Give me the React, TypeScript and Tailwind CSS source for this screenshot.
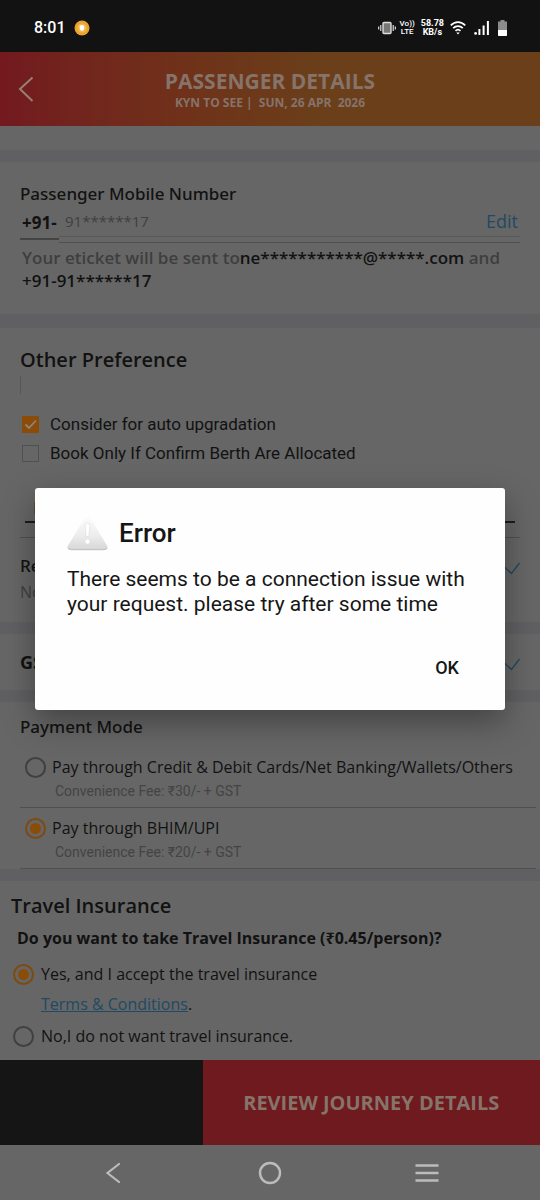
import { useState, type ReactNode } from 'react';

interface SectionProps {
  children: ReactNode;
  className?: string;
}

interface PaymentOption {
  id: string;
  label: string;
  fee: string;
}

const paymentOptions: PaymentOption[] = [
  { id: "cards", label: "Pay through Credit & Debit Cards/Net Banking/Wallets/Others", fee: "Convenience Fee: ₹30/- + GST" },
  { id: "upi", label: "Pay through BHIM/UPI", fee: "Convenience Fee: ₹20/- + GST" },
];

const radioStyle =
  "size-[21px] shrink-0 appearance-none rounded-full border-2 border-[#404040] p-[3px] bg-clip-content checked:border-[#7d4a12] checked:bg-[#8a4c08]";

function Section({ children, className = "" }: SectionProps) {
  return <section className={`bg-[#666666] ${className}`}>{children}</section>;
}

function StatusBar() {
  return (
    <div className="flex h-[52px] items-center bg-[#121212] pt-1 pl-[34px] pr-[33px] font-[Roboto,sans-serif] text-white">
      <span className="text-base font-medium">8:01</span>
      <svg className="ml-2" width="16" height="16" viewBox="0 0 16 16">
        <circle cx="8" cy="8" r="7.5" fill="#eba52c" />
        <circle cx="8" cy="8" r="4.6" fill="#f2b94e" />
        <path d="M5.6 5.6 8 5l2.2.8v3.4L8 11.2 5.9 9.6z" fill="#fff" />
      </svg>
      <div className="ml-auto flex items-center">
        <svg width="18" height="14" viewBox="0 0 18 14" stroke="#ddd" fill="none">
          <rect x="5" y="1.5" width="8" height="11" rx="1" fill="#777" strokeWidth="1.4" />
          <path d="M2.8 4v6M15.2 4v6M.7 5.5v3M17.3 5.5v3" strokeWidth="1.2" />
        </svg>
        <div className="ml-1 text-center text-[8px] leading-[8px] font-medium">
          <div>Vo))</div>
          <div>LTE</div>
        </div>
        <div className="ml-1.5 text-center text-[9px] leading-[9px] font-bold">
          <div>58.78</div>
          <div>KB/s</div>
        </div>
        <svg className="ml-1.5" width="16" height="14" viewBox="0 0 16 14" fill="none" stroke="#fff" strokeWidth="1.7">
          <path d="M.8 4.4C5-.1 11-.1 15.2 4.4M3.2 7.2c2.8-2.9 6.8-2.9 9.6 0M5.5 9.9c1.5-1.5 3.5-1.5 5 0" />
          <path d="m8 13.4-1.7-2h3.4z" fill="#fff" stroke="none" />
        </svg>
        <svg className="ml-2" width="16" height="14" viewBox="0 0 16 14" fill="#fff">
          <circle cx="1.6" cy="12.4" r="1.4" />
          <path d="M4.4 8h2v6h-2zM8.6 4.4h2V14h-2zM12.9 0h2v14h-2z" />
        </svg>
        <svg className="ml-2" width="9" height="16" viewBox="0 0 9 16">
          <path d="M2.5 0h4v1.4H9V15a1 1 0 0 1-1 1H1a1 1 0 0 1-1-1V1.4h2.5z" fill="#8c8c8c" />
          <path d="M0 10h9v5a1 1 0 0 1-1 1H1a1 1 0 0 1-1-1z" fill="#fff" />
        </svg>
      </div>
    </div>
  );
}

function Header() {
  return (
    <header className="relative flex h-[74px] flex-col items-center justify-center bg-linear-to-r from-[#73191f] via-[#6f3219] via-35% to-[#6a3f1a] to-60% pt-1 text-[#86736a]">
      <button type="button" aria-label="Back" className="absolute top-6 left-[18px]">
        <svg width="16" height="26" viewBox="0 0 16 26" fill="none" stroke="#98806f" strokeWidth="2">
          <path d="M14.5 1.5 2 13l12.5 12" />
        </svg>
      </button>
      <h1 className="text-[21px] leading-6 font-bold">PASSENGER DETAILS</h1>
      <p className="text-xs leading-5 font-bold whitespace-pre">KYN TO SEE |  SUN, 26 APR  2026</p>
    </header>
  );
}

function Tick() {
  return (
    <svg className="mt-2 shrink-0" width="18" height="14" viewBox="0 0 18 14" fill="none" stroke="#24495e" strokeWidth="1.4">
      <path d="M1.500 4 9.500 11.500 17.500 1" />
    </svg>
  );
}

function ErrorDialog({ onClose }: { onClose: () => void }) {
  return (
    <div className="absolute inset-0 flex items-center justify-center px-[35px]">
      <div
        role="alertdialog"
        aria-labelledby="error-title"
        className="w-full rounded-[3px] bg-[#fefefe] px-8 pt-6 pb-6 font-[Roboto,sans-serif] text-[#161616] shadow-[0_12px_32px_rgba(0,0,0,0.35)]"
      >
        <div className="flex items-center gap-[11px]">
          <svg width="41" height="36" viewBox="0 0 41 36">
            <defs>
              <linearGradient id="warn" x1="0" y1="0" x2="0" y2="1">
                <stop offset="0" stopColor="#fefefe" />
                <stop offset="0.6" stopColor="#ececec" />
                <stop offset="1" stopColor="#d6d6d6" />
              </linearGradient>
            </defs>
            <path d="M18 2.500q2.500-4 5 0l17 28q2 4.500-2.500 4.500h-34Q-1 35 1 30.500z" fill="url(#warn)" />
            <path d="M1.500 33q.5 1.700 3 1.700h32q2.500 0 3-1.700" fill="none" stroke="#bdbdbd" />
            <path d="M18 9q2.500-2 5 0l-1.200 12.500h-2.600z" fill="#fff" stroke="#dadada" strokeWidth=".6" />
            <circle cx="20.500" cy="26.500" r="2.700" fill="#fff" stroke="#d2d2d2" strokeWidth=".6" />
          </svg>
          <h2 id="error-title" className="text-[26px] leading-[42px] font-medium">Error</h2>
        </div>
        <p className="mt-[13px] text-[21px] leading-[25px]">
          There seems to be a connection issue with your request. please try after some time
        </p>
        <div className="mt-[33px] flex justify-end pr-[14px]">
          <button type="button" onClick={onClose} className="text-lg leading-9 font-medium">OK</button>
        </div>
      </div>
    </div>
  );
}

export default function App() {
  const [showError, setShowError] = useState(true);
  const [payment, setPayment] = useState("upi");
  const [insurance, setInsurance] = useState("yes");

  return (
    <div className="min-h-screen bg-[#666666] font-['Open_Sans','Noto_Sans',sans-serif] text-[#121212]">
      <StatusBar />
      <div className="relative">
        <Header />

        <main className="bg-[#606063]">
          <div className="mb-3 h-6 bg-[#666666]" />

          <Section className="px-5 pt-5 pb-[22px]">
            <label htmlFor="mobile" className="block font-['Noto_Sans',sans-serif] text-[17px] leading-6 font-medium">Passenger Mobile Number</label>
            <div className="flex items-start">
              <span className="h-[34px] w-[39px] border-b-2 border-[#444444] pl-0.5 text-[17px] leading-[34px] font-bold">+91-</span>
              <div className="h-[37px] flex-1 border-b border-[#505050]">
                <div className="flex h-[31px] items-center border-b border-[#585858] pl-1.5">
                  <input id="mobile" readOnly value="91******17" className="w-0 flex-1 bg-transparent text-[15px] text-[#404040] outline-none" />
                  <button type="button" className="pr-0.5 text-lg text-[#1f4a63]">Edit</button>
                </div>
              </div>
            </div>
            <p className="pt-[3px] pl-0.5 text-[17px] leading-[23px] font-semibold">
              <span className="text-[#3e3e3e]">Your eticket will be sent to</span>ne***********@*****.com <span className="text-[#3e3e3e]">and</span> +91-91******17
            </p>
          </Section>

          <Section className="mt-3.5 px-5 pt-5 pb-4">
            <h2 className="text-xl leading-6 font-semibold">Other Preference</h2>
            <div className="mt-1 mb-[18px] h-[18px] border-l border-[#555555]" />
            <div className="flex flex-col gap-[5px] pl-0.5 font-[Roboto,sans-serif] text-[17px] leading-6">
              <label className="flex items-center gap-[11px]">
                <span className="grid">
                  <input type="checkbox" defaultChecked className="size-[17px] appearance-none border border-[#505050] [grid-area:1/1] checked:border-[#8a4c08] checked:bg-[#8a4c08]" />
                  <svg className="pointer-events-none [grid-area:1/1]" width="17" height="17" viewBox="0 0 17 17" fill="none" stroke="#8f8578" strokeWidth="1.800">
                    <path d="m3.500 8.500 3.500 3.500 7-7.500" />
                  </svg>
                </span>
                Consider for auto upgradation
              </label>
              <label className="flex items-center gap-[11px]">
                <input type="checkbox" className="size-[17px] appearance-none border border-[#505050] checked:bg-[#8a4c08]" />
                Book Only If Confirm Berth Are Allocated
              </label>
            </div>
            <div className="mt-[30px] border-b border-[#505050] px-[5px] pb-3.5">
              <input aria-label="Preferred coach" placeholder="Preferred Coach No" className="block h-[28px] w-full border-b-2 border-[#1c1c1c] bg-transparent pl-2 text-base placeholder:text-[#303030]" />
            </div>
            <div className="flex justify-between pt-4">
              <div>
                <h3 className="font-['Noto_Sans',sans-serif] text-[17px] leading-6 font-medium">Reservation Choice</h3>
                <p className="text-base leading-7 font-medium text-[#404040]">None</p>
              </div>
              <Tick />
            </div>
          </Section>

          <Section className="mt-3 flex justify-between px-5 py-4">
            <h2 className="text-lg leading-6 font-bold">GST Details</h2>
            <Tick />
          </Section>

          <Section className="mt-3 pt-[13px] pr-1 pl-5">
            <h3 className="pb-4 font-['Noto_Sans',sans-serif] text-[17px] leading-6 font-medium">Payment Mode</h3>
            <div className="flex flex-col gap-2">
              {paymentOptions.map(({ id, label, fee }) => (
                <label key={id} className="block border-b border-[#505050] pb-1 pl-[5px]">
                  <span className="flex items-center gap-1.5 text-base leading-6">
                    <input type="radio" name="payment" checked={payment === id} onChange={() => setPayment(id)} className={radioStyle} />
                    {label}
                  </span>
                  <span className="block pl-[30px] font-[Roboto,sans-serif] text-sm leading-6 text-[#444444]">{fee}</span>
                </label>
              ))}
            </div>
          </Section>

          <Section className="mt-3 px-[11px] pt-[13px] pb-3">
            <h2 className="text-xl leading-6 font-semibold">Travel Insurance</h2>
            <p className="pt-2 pl-1.5 text-base leading-6 font-bold">Do you want to take Travel Insurance (₹0.45/person)?</p>
            <div className="pt-3 pl-0.5 text-base leading-6">
              <label className="flex items-center gap-[7px]">
                <input type="radio" name="insurance" checked={insurance === "yes"} onChange={() => setInsurance("yes")} className={radioStyle} />
                Yes, and I accept the travel insurance
              </label>
              <p className="pt-1.5 pb-2 pl-7">
                <a href="#terms" className="text-[#1f4a63] underline">Terms &amp; Conditions</a>.
              </p>
              <label className="flex items-center gap-[7px]">
                <input type="radio" name="insurance" checked={insurance === "no"} onChange={() => setInsurance("no")} className={radioStyle} />
                No,I do not want travel insurance.
              </label>
            </div>
          </Section>
        </main>

        <div className="flex h-[85px] bg-[#151515]">
          <button type="button" className="ml-[37.5%] flex-1 bg-[#6f1a1e] text-xl font-bold text-[#86736a]">REVIEW JOURNEY DETAILS</button>
        </div>

        {showError && <ErrorDialog onClose={() => setShowError(false)} />}
      </div>

      <nav className="flex h-[55px] items-center justify-between px-[101px] text-[#bcbcbc]">
        <button type="button" aria-label="Go back" className="flex w-6 justify-center">
          <svg width="16" height="22" viewBox="0 0 16 22" fill="none" stroke="currentColor" strokeWidth="2.200" strokeLinecap="round">
            <path d="M14 2 2.500 11 14 20" />
          </svg>
        </button>
        <button type="button" aria-label="Home">
          <svg width="24" height="24" viewBox="0 0 24 24" fill="none" stroke="currentColor" strokeWidth="2.400">
            <circle cx="12" cy="12" r="10" />
          </svg>
        </button>
        <button type="button" aria-label="Recent apps">
          <svg width="24" height="20" viewBox="0 0 24 20" stroke="currentColor" strokeWidth="2.600">
            <path d="M.5 2.500h23M.5 10h23M.5 17.500h23" />
          </svg>
        </button>
      </nav>
    </div>
  );
}
